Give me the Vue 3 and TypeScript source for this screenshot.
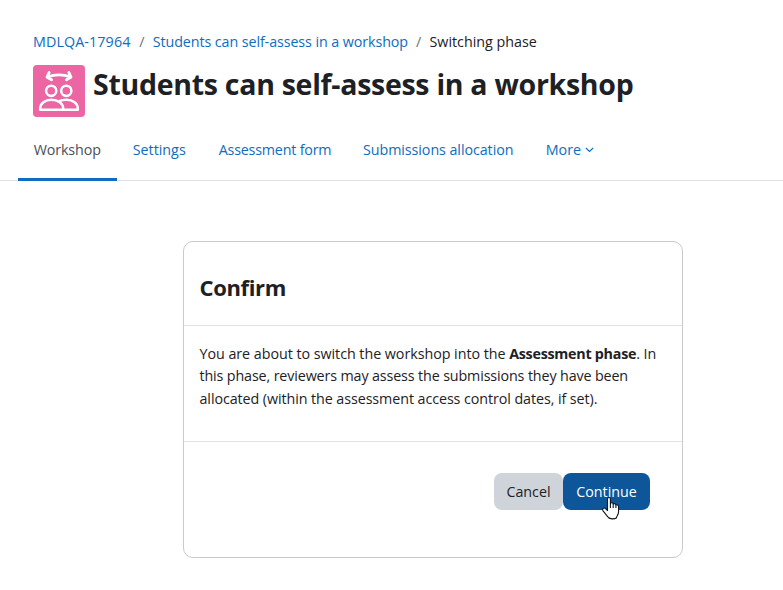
<script setup lang="ts">
interface Tab {
  label: string
  name: string
  active?: boolean
  menu?: boolean
}

const tabs: Tab[] = [
  { label: 'Workshop', name: 'workshop', active: true },
  { label: 'Settings', name: 'settings' },
  { label: 'Assessment form', name: 'form' },
  { label: 'Submissions allocation', name: 'allocation' },
  { label: 'More', name: 'more', menu: true },
]
</script>

<template>
  <div class="page">
    <nav class="breadcrumb">
      <a class="crumb-course">MDLQA-17964</a>
      <span class="slash">/</span>
      <a class="crumb-activity">Students can self-assess in a workshop</a>
      <span class="slash">/</span>
      <span class="crumb-current">Switching phase</span>
    </nav>

    <header class="heading">
      <div class="activity-icon">
        <svg viewBox="0 0 52 52" width="52" height="52" fill="none" stroke="#fff" stroke-width="2.5" stroke-linecap="round" stroke-linejoin="round">
          <path stroke-width="2.8" d="M14.2 12Q26 7.6 37.8 12M16.2 7.4L14 12.2L18.6 14.8M35.8 7.4L38 12.2L33.4 14.8" />
          <circle cx="18.2" cy="25.8" r="5.1" />
          <circle cx="33.3" cy="25.8" r="5.1" />
          <path d="M7.2 44.8V43.5C7.2 38.5 12 34.8 18.5 34.8S30.2 38.5 30.2 43.5V44.8Z" />
          <path d="M26.3 36.2C28.3 35.2 30.7 34.8 33.5 34.8C40 34.8 44.8 38.5 44.8 43.5V44.8H30.2" />
        </svg>
      </div>
      <h1>Students can self-assess in a workshop</h1>
    </header>

    <nav class="tabs">
      <a v-for="tab in tabs" :key="tab.name" class="tab" :class="[tab.name, { active: tab.active }]">
        <span>{{ tab.label }}</span>
        <svg v-if="tab.menu" class="caret" viewBox="0 0 9 6" width="9" height="6" fill="none" stroke="currentColor" stroke-width="1.1">
          <path d="M.9 1L4.5 4.4L8.1 1" />
        </svg>
      </a>
    </nav>

    <section class="card">
      <div class="card-head"><h2>Confirm</h2></div>
      <div class="card-body">
        <p>
          <span class="line l1">You are about to switch the workshop into the <b>Assessment phase</b>. In</span>
          <span class="line l2">this phase, reviewers may assess the submissions they have been</span>
          <span class="line l3">allocated (within the assessment access control dates, if set).</span>
        </p>
      </div>
      <div class="card-foot">
        <button class="btn cancel">Cancel</button>
        <button class="btn continue">
          <span>Continue</span>
          <svg class="pointer" viewBox="0 0 18 24" width="18" height="24">
            <path d="M5.5 14.5V3C5.5.9 8.4.9 8.4 3V7.3C9.4 6.2 11 6.8 11.2 8C12.3 7.2 13.7 7.8 13.9 9C15.1 8.4 16.6 9.2 16.6 10.7V15.5C16.6 18.5 15 19.5 14.3 22C12.5 23.2 8 23.2 6.4 21.5C4.7 19.3 2.8 17.1 1 14.8C-.2 12.7 2.1 11.1 3.8 12.8Z" fill="#fff" stroke="#10131a" stroke-width="1.1" stroke-linejoin="round" />
            <path d="M8.4 7V12M11.2 8V12M13.9 9V12" fill="none" stroke="#10131a" stroke-width="1.1" />
          </svg>
        </button>
      </div>
    </section>
  </div>
</template>

<style>
body {
  margin: 0;
  background: #fff;
}
</style>

<style scoped>
.page {
  box-sizing: border-box;
  width: 783px;
  height: 590px;
  padding-top: 31px;
  overflow: hidden;
  color: #1d2125;
  font-family: "Open Sans", "Noto Sans", sans-serif;
  font-size: 14.3px;
  line-height: 22px;
}
.breadcrumb {
  display: flex;
  height: 34px;
  padding-left: 33px;
  white-space: nowrap;
}
.breadcrumb a,
.tab {
  color: #0f6cbf;
}
.crumb-course {
  width: 98px;
  letter-spacing: 0.1px;
}
.crumb-activity {
  width: 255px;
  letter-spacing: -0.09px;
}
.slash {
  width: 21.75px;
  text-align: center;
  color: #6a737b;
}
.heading {
  display: flex;
  height: 64px;
  padding-left: 33px;
  gap: 8px;
}
.activity-icon {
  width: 52px;
  height: 52px;
  border-radius: 4px;
  background: #eb66a2;
}
.activity-icon svg {
  display: block;
}
h1,
h2,
p {
  margin: 0;
}
h1 {
  font-size: 28.5px;
  line-height: 38px;
  font-weight: 700;
  letter-spacing: -0.28px;
  white-space: nowrap;
}
.tabs {
  box-sizing: border-box;
  display: flex;
  height: 52px;
  padding-left: 18px;
  border-bottom: 1px solid #dee2e6;
}
.tab {
  box-sizing: border-box;
  display: flex;
  height: 52px;
  padding: 10px 0 0 15.7px;
  border-bottom: 3px solid transparent;
  white-space: nowrap;
}
.tab.active {
  color: #495057;
  border-bottom-color: #0f6cbf;
}
.tab.workshop {
  width: 99px;
  letter-spacing: -0.12px;
}
.tab.settings {
  width: 86px;
}
.tab.form {
  width: 144.3px;
  letter-spacing: -0.2px;
}
.tab.allocation {
  width: 182.7px;
  letter-spacing: -0.07px;
}
.caret {
  margin: 8px 0 0 4px;
}
.card {
  box-sizing: border-box;
  width: 500px;
  height: 317px;
  margin: 60px 0 0 183px;
  border: 1px solid #c9cacb;
  border-radius: 10px;
}
.card-head {
  box-sizing: border-box;
  height: 84px;
  padding: 31px 0 0 15.5px;
  border-bottom: 1px solid #dee2e6;
}
h2 {
  font-size: 22px;
  line-height: 28px;
  font-weight: 700;
  letter-spacing: -0.35px;
}
.card-body {
  box-sizing: border-box;
  height: 116px;
  padding: 17px 0 0 15.5px;
  border-bottom: 1px solid #dee2e6;
}
.line {
  display: block;
  height: 22.3px;
  line-height: 22.3px;
  white-space: nowrap;
}
.l1 {
  letter-spacing: -0.04px;
}
.l1 b {
  letter-spacing: -0.26px;
}
.l2 {
  letter-spacing: -0.13px;
}
.l3 {
  letter-spacing: -0.08px;
}
.card-foot {
  display: flex;
  justify-content: flex-end;
  padding: 31px 32px 0 0;
}
.btn {
  position: relative;
  height: 37px;
  padding: 0;
  border: 0;
  border-radius: 8px;
  font: inherit;
  white-space: nowrap;
}
.cancel {
  width: 69px;
  background: #ced4da;
  color: #1d2125;
}
.continue {
  width: 87px;
  background: #0c5699;
  color: #fff;
}
.pointer {
  position: absolute;
  left: 39px;
  top: 23px;
}
</style>
